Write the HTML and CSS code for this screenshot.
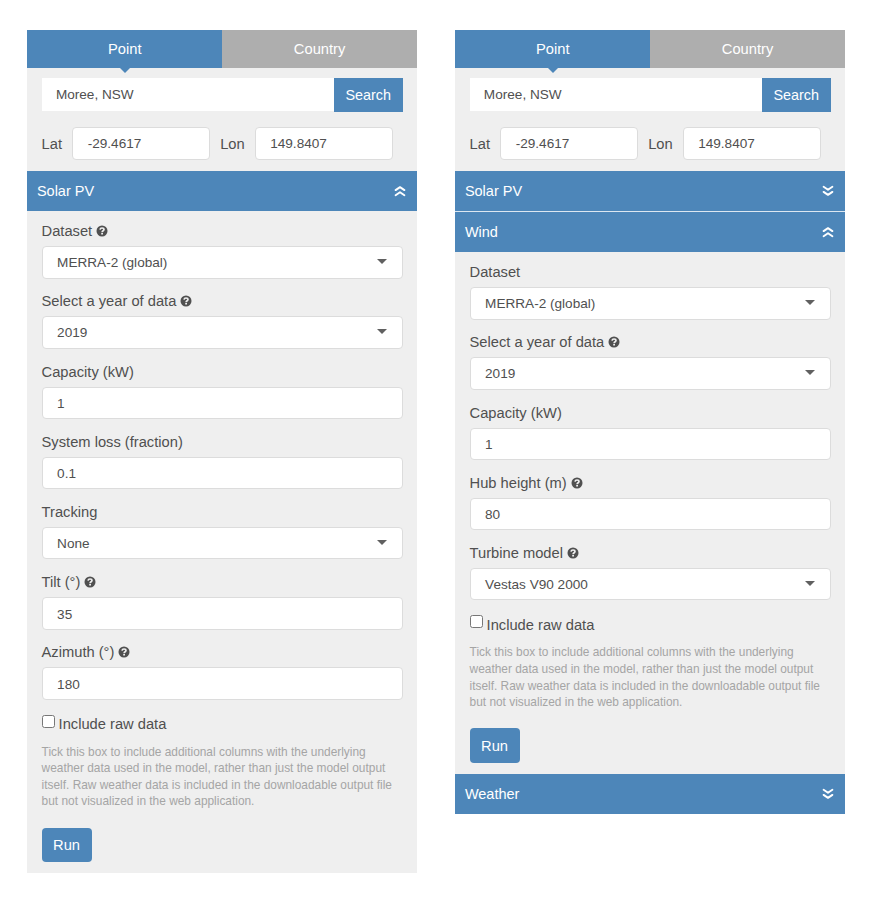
FILE: index.html
```html
<!DOCTYPE html>
<html lang="en">
<head>
<meta charset="utf-8">
<title>Point simulation</title>
<link rel="stylesheet" href="styles.css">
</head>
<body>
<svg class="defs" aria-hidden="true">
  <symbol id="up" viewBox="0 0 12 12"><path d="M1.600 5.100 6 2.100l4.400 3M1.600 10.300 6 7.300l4.400 3"/></symbol>
  <symbol id="down" viewBox="0 0 12 12"><path d="M1.600 1.700 6 4.700l4.400-3M1.600 6.900 6 9.900l4.400-3"/></symbol>
  <symbol id="help" viewBox="0 0 12 12"><circle cx="6" cy="6" r="5.500" fill="#505050"/><path d="M4 4.700C4.200 3.500 5 3 6 3c1.200 0 2 .7 2 1.600C8 5.800 6.100 5.800 6.100 7.200" fill="none" stroke="#efefef" stroke-width="1.700"/><path d="M5.200 8h1.800v1.600H5.200z" fill="#efefef"/></symbol>
</svg>
<main class="page">
  <section class="panel solar">
    <nav class="tabs"><a class="tab active">Point</a><a class="tab">Country</a></nav>
    <div class="location">
      <div class="search"><div class="query">Moree, NSW</div><button class="search-btn">Search</button></div>
      <div class="coords"><span class="lat">Lat</span><div class="input">-29.4617</div><span class="lon">Lon</span><div class="input">149.8407</div></div>
    </div>
    <header class="bar"><span>Solar PV</span><svg class="chev"><use href="#up"/></svg></header>
    <div class="form">
      <div class="field"><label>Dataset <svg class="help"><use href="#help"/></svg></label><div class="input select">MERRA-2 (global)</div></div>
      <div class="field"><label>Select a year of data <svg class="help"><use href="#help"/></svg></label><div class="input select">2019</div></div>
      <div class="field"><label>Capacity (kW)</label><div class="input">1</div></div>
      <div class="field"><label>System loss (fraction)</label><div class="input">0.1</div></div>
      <div class="field"><label>Tracking</label><div class="input select">None</div></div>
      <div class="field"><label>Tilt (°) <svg class="help"><use href="#help"/></svg></label><div class="input">35</div></div>
      <div class="field"><label>Azimuth (°) <svg class="help"><use href="#help"/></svg></label><div class="input">180</div></div>
      <div class="check"><span class="box"></span><span>Include raw data</span></div>
      <p class="note">Tick this box to include additional columns with the underlying<br>weather data used in the model, rather than just the model output<br>itself. Raw weather data is included in the downloadable output file<br>but not visualized in the web application.</p>
      <button class="run">Run</button>
    </div>
  </section>
  <section class="panel wind">
    <nav class="tabs"><a class="tab active">Point</a><a class="tab">Country</a></nav>
    <div class="location">
      <div class="search"><div class="query">Moree, NSW</div><button class="search-btn">Search</button></div>
      <div class="coords"><span class="lat">Lat</span><div class="input">-29.4617</div><span class="lon">Lon</span><div class="input">149.8407</div></div>
    </div>
    <header class="bar"><span>Solar PV</span><svg class="chev"><use href="#down"/></svg></header>
    <header class="bar next"><span>Wind</span><svg class="chev"><use href="#up"/></svg></header>
    <div class="form">
      <div class="field"><label>Dataset</label><div class="input select">MERRA-2 (global)</div></div>
      <div class="field"><label>Select a year of data <svg class="help"><use href="#help"/></svg></label><div class="input select">2019</div></div>
      <div class="field"><label>Capacity (kW)</label><div class="input">1</div></div>
      <div class="field"><label>Hub height (m) <svg class="help"><use href="#help"/></svg></label><div class="input">80</div></div>
      <div class="field"><label>Turbine model <svg class="help"><use href="#help"/></svg></label><div class="input select">Vestas V90 2000</div></div>
      <div class="check"><span class="box"></span><span>Include raw data</span></div>
      <p class="note">Tick this box to include additional columns with the underlying<br>weather data used in the model, rather than just the model output<br>itself. Raw weather data is included in the downloadable output file<br>but not visualized in the web application.</p>
      <button class="run">Run</button>
    </div>
    <header class="bar"><span>Weather</span><svg class="chev"><use href="#down"/></svg></header>
  </section>
</main>
</body>
</html>
```
FILE: styles.css
```css
* { box-sizing: border-box; }
body {
  margin: 0;
  background: #fff;
  color: #505050;
  font: 14.7px/20px "Liberation Sans", Arial, sans-serif;
}
button { border: 0; padding: 0; font: inherit; color: #fff; background: #4d86b9; }
.defs { position: absolute; width: 0; height: 0; }
.page { display: flex; align-items: flex-start; gap: 38.4px; padding: 29.5px 0 0 27.4px; }
.panel { width: 389.6px; background: #efefef; }
.tabs { display: flex; height: 38.7px; }
.tab {
  width: 50%;
  background: #aeaeae;
  color: #fff;
  text-align: center;
  line-height: 38px;
}
.tab.active { position: relative; background: #4d86b9; }
.tab.active::after {
  content: "";
  position: absolute;
  left: 50%;
  top: 100%;
  margin-left: -5px;
  border: 5px solid transparent;
  border-top-color: #4d86b9;
  border-bottom: 0;
}
.location { height: 102.5px; padding: 10px 14.2px 0; }
.search { display: flex; height: 33.5px; }
.query { flex: 1; height: 33px; padding-left: 14.3px; background: #fff; font-size: 13.6px; line-height: 34px; }
.search-btn { width: 69.2px; font-size: 14.4px; line-height: 35px; }
.coords { display: flex; align-items: center; margin-top: 15.5px; }
.coords .input { width: 138px; padding-left: 14.5px; }
.coords span { padding-top: 1px; }
.lat { width: 30.6px; }
.lon { width: 35px; margin-left: 10px; margin-right: -.5px; }
.input {
  height: 32.4px;
  padding-left: 14.5px;
  background: #fff;
  border: 1px solid #dcdcdc;
  border-radius: 4px;
  font-size: 13.6px;
  line-height: 31px;
}
.field .input { padding-top: .5px; }
.select { display: flex; align-items: center; justify-content: space-between; padding-right: 14.6px; }
.select::after {
  content: "";
  margin-top: -2px;
  border: 5px solid transparent;
  border-top-color: #606060;
  border-bottom: 0;
}
.bar {
  display: flex;
  align-items: center;
  justify-content: space-between;
  height: 40px;
  padding: 0 10.5px 0 9.5px;
  background: #4d86b9;
  color: #fff;
  font-size: 14.5px;
}
.bar.next { height: 41px; border-top: 1px solid #dce7f1; }
.chev { width: 12px; height: 12px; margin-top: 1px; fill: none; stroke: #fff; stroke-width: 1.9; stroke-linecap: round; stroke-linejoin: round; }
.form { padding: 10.5px 14.2px 10.8px; }
.field { height: 70.2px; }
.field label { display: block; height: 25px; }
.help { width: 12px; height: 12px; vertical-align: -1px; }
.check { display: flex; height: 20px; padding-top: 1.500px; }
.box { width: 13px; height: 13px; margin: .5px 4px 0 0; background: #fff; border: 1px solid #777; border-radius: 2.500px; }
.note { margin: 11.200px 0 0; color: #a5a5a5; font-size: 11.9px; line-height: 16.6px; white-space: nowrap; }
.run { display: block; width: 50px; height: 34.400px; margin-top: 17.700px; border-radius: 4px; }
```
